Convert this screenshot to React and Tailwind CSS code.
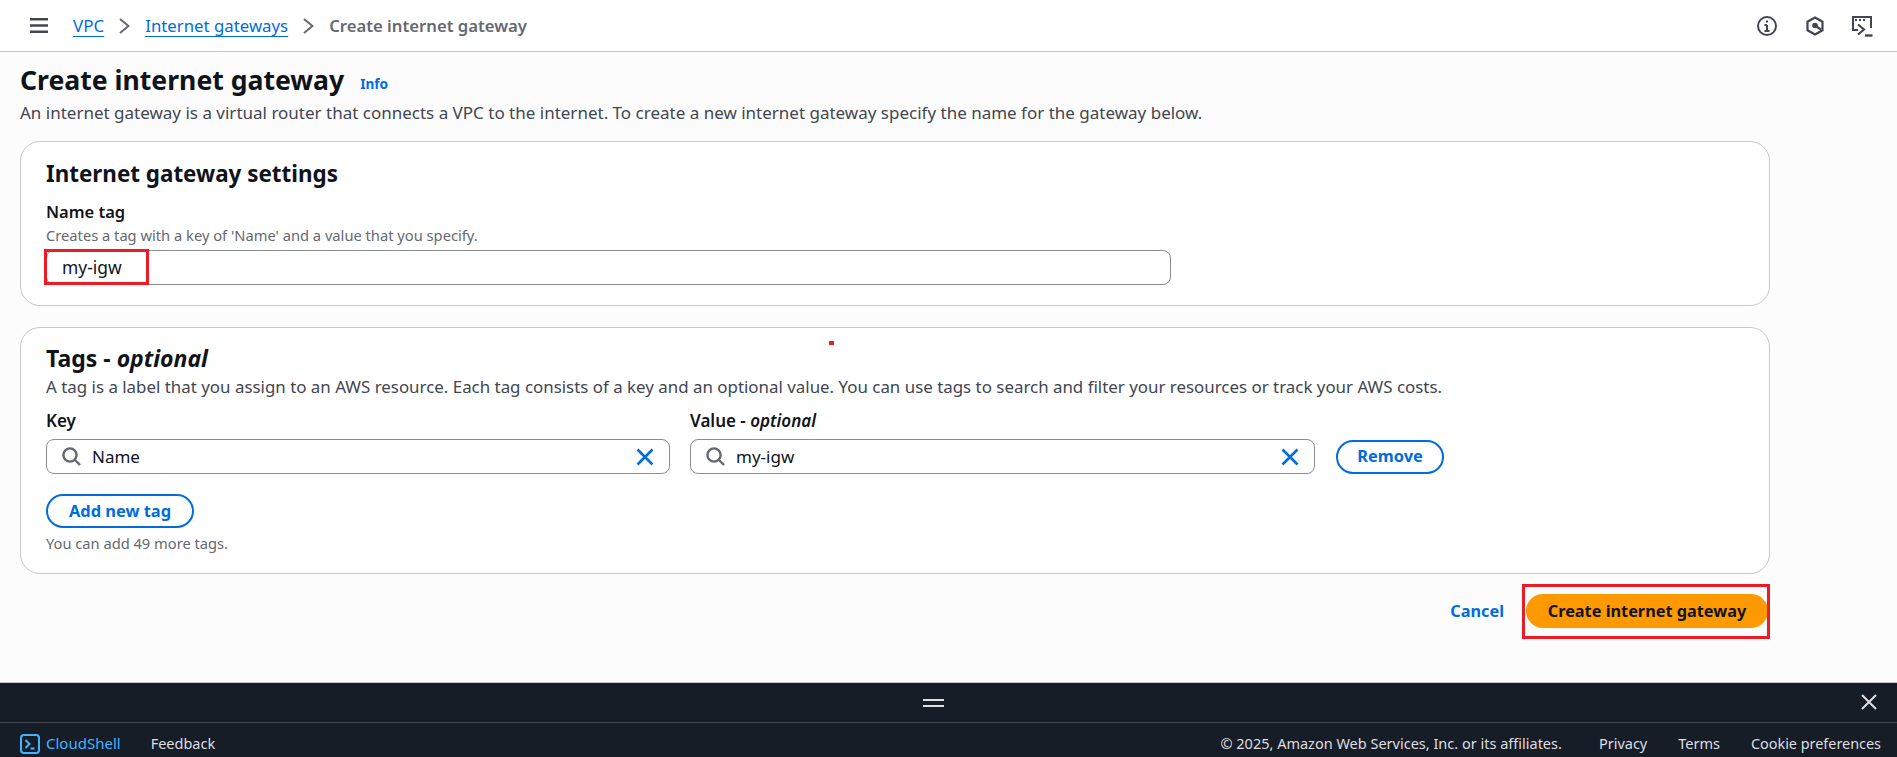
import React from "react";

const Chevron = () => (
  <svg width="11" height="16" viewBox="0 0 11 16" fill="none" stroke="#656871" strokeWidth="2" className="mx-[15px] shrink-0">
    <path d="M1 1l8.5 7L1 15" />
  </svg>
);

const SearchIcon = () => (
  <svg width="19" height="19" viewBox="0 0 19 19" fill="none" stroke="#656871" strokeWidth="2.4" className="shrink-0">
    <circle cx="8" cy="8" r="6.6" />
    <path d="M12.5 12.5l5.5 5.5" />
  </svg>
);

const ClearIcon = () => (
  <svg width="18" height="18" viewBox="0 0 18 18" fill="none" stroke="#006ce0" strokeWidth="2.6" className="shrink-0">
    <path d="M1.5 1.5l15 15M16.5 1.5l-15 15" />
  </svg>
);

const Clearable = ({ value, width }) => (
  <div className={`flex items-center h-[35px] ${width} rounded-lg border border-[#8c8c94] bg-white pl-[15px] pr-[15px]`}>
    <SearchIcon />
    <span className="ml-[11px] flex-1 text-[17px] text-[#0f141a]">{value}</span>
    <ClearIcon />
  </div>
);

const Outline = ({ children, className }) => (
  <button className={`h-[34px] rounded-full border-2 border-[#006ce0] bg-white text-[16.4px] font-bold text-[#006ce0] ${className}`}>
    {children}
  </button>
);

const App = () => {
  return (
    <div className="relative flex h-[757px] flex-col overflow-hidden bg-[#fcfcfc] font-['Noto_Sans',sans-serif] text-[#0f141a]">
      {/* top breadcrumb bar */}
      <header className="flex h-[52px] shrink-0 items-center border-b border-[#c6c6cd] bg-white pl-[30px] pr-[24px]">
        <svg width="18" height="15" viewBox="0 0 18 15" className="text-[#424650]">
          <path d="M0 1.3h18M0 7.5h18M0 13.7h18" stroke="currentColor" strokeWidth="2.5" fill="none" />
        </svg>
        <a className="ml-[25px] text-[17px] text-[#006ce0] underline underline-offset-4">VPC</a>
        <Chevron />
        <a className="text-[16.8px] text-[#006ce0] underline underline-offset-4">Internet gateways</a>
        <Chevron />
        <span className="text-[16.7px] font-semibold text-[#656871]">Create internet gateway</span>
        <div className="ml-auto flex items-center text-[#424650]">
          <svg width="20" height="20" viewBox="0 0 20 20" fill="none" stroke="currentColor" strokeWidth="2">
            <circle cx="10" cy="10" r="9" />
            <path d="M10 9v6M7.5 15h5M7.5 9H10" />
            <path d="M10 4.5v2" />
          </svg>
          <svg width="20" height="20" viewBox="0 0 20 20" fill="none" stroke="currentColor" strokeWidth="2.2" className="ml-[28px]">
            <path d="M10 1.5l7.5 4.2v8.6L10 18.5l-7.5-4.2V5.7z" />
            <circle cx="10" cy="9.5" r="2.8" fill="currentColor" stroke="none" />
            <path d="M10.5 10l5.5 3.5" />
          </svg>
          <svg width="22" height="22" viewBox="0 0 22 22" fill="none" stroke="currentColor" strokeWidth="2" className="ml-[26px]">
            <path d="M7 15H2V2h18v11" />
            <path d="M4 5h2M8 5h2M12 5h2" strokeWidth="2" />
            <path d="M7 9.5l6 5-6 5" strokeWidth="2.2" />
            <path d="M14 20.5h7.5" strokeWidth="2.4" />
          </svg>
        </div>
      </header>

      <main className="flex-1 pl-[20px]">
        <div className="mt-[10px] flex h-[36px] items-center">
          <h1 className="text-[26.6px] font-bold leading-[36px]">Create internet gateway</h1>
          <a className="ml-[16px] mt-[8px] text-[13.6px] font-bold text-[#006ce0]">Info</a>
        </div>
        <p className="mt-[5px] text-[17px] leading-[20px] text-[#424650]">
          An internet gateway is a virtual router that connects a VPC to the internet. To create a new internet gateway specify the name for the gateway below.
        </p>

        <section className="mt-[18px] h-[165px] w-[1750px] rounded-[20px] border border-[#c6c6cd] bg-white pl-[25px] pt-[18px]">
          <h2 className="text-[22.4px] font-bold leading-[28px]">Internet gateway settings</h2>
          <div className="mt-[13px] text-[16.5px] font-semibold leading-[22px]">Name tag</div>
          <div className="mt-[3px] text-[14.7px] leading-[18px] text-[#656871]">Creates a tag with a key of 'Name' and a value that you specify.</div>
          <div className="mt-[6px] flex h-[35px] w-[1125px] items-center rounded-lg border border-[#8c8c94] bg-white pl-[15px] text-[17.4px]">my-igw</div>
        </section>

        <section className="mt-[21px] h-[247px] w-[1750px] rounded-[20px] border border-[#c6c6cd] bg-white pl-[25px] pt-[16px]">
          <h2 className="text-[23px] leading-[28px] font-bold">
            Tags - <em className="font-bold italic">optional</em>
          </h2>
          <p className="mt-[5px] text-[16.9px] leading-[20px] text-[#424650]">
            A tag is a label that you assign to an AWS resource. Each tag consists of a key and an optional value. You can use tags to search and filter your resources or track your AWS costs.
          </p>
          <div className="mt-[13px] flex text-[17px] font-semibold leading-[22px]">
            <div className="w-[644px]">Key</div>
            <div>
              Value - <em className="italic">optional</em>
            </div>
          </div>
          <div className="mt-[7px] flex items-center">
            <Clearable value="Name" width="w-[624px]" />
            <div className="ml-[20px]">
              <Clearable value="my-igw" width="w-[625px]" />
            </div>
            <Outline className="ml-[21px] w-[108px]">Remove</Outline>
          </div>
          <Outline className="mt-[20px] block w-[148px]">Add new tag</Outline>
          <div className="mt-[6px] text-[14.66px] leading-[18px] text-[#656871]">You can add 49 more tags.</div>
        </section>

        <div className="mt-[20px] flex w-[1750px] items-center justify-end">
          <a className="mr-[22px] text-[16.3px] font-bold text-[#006ce0]">Cancel</a>
          <button className="mr-[2px] h-[34px] w-[242px] rounded-full bg-[#ff9900] text-[16.3px] font-bold text-[#0f141a]">
            Create internet gateway
          </button>
        </div>
      </main>

      {/* cloudshell bar */}
      <footer className="h-[75px] shrink-0 border-t border-[#c6c6cd] bg-[#161d26] text-[14.5px] text-[#dedee3]">
        <div className="relative flex h-[40px] items-center border-b border-[#424650] pl-[923px]">
          <svg width="21" height="8" viewBox="0 0 21 8" className="text-[#dedee3]">
            <path d="M0 1h21M0 7h21" stroke="currentColor" strokeWidth="2" />
          </svg>
          <svg width="16" height="16" viewBox="0 0 16 16" fill="none" stroke="#dedee3" strokeWidth="2" className="absolute right-[20px] top-[11px]">
            <path d="M1 1l14 14M15 1L1 15" />
          </svg>
        </div>
        <div className="flex h-[34px] items-center pl-[20px] pr-[16px] pt-[7px]">
          <svg width="20" height="20" viewBox="0 0 20 20" fill="none" stroke="#42b4ff" strokeWidth="2">
            <rect x="1" y="1" width="18" height="18" rx="3" />
            <path d="M5.5 6l4 4-4 4M10.5 14.5h4" />
          </svg>
          <span className="ml-[6px] text-[15px] text-[#42b4ff]">CloudShell</span>
          <span className="ml-[30px]">Feedback</span>
          <span className="ml-auto">© 2025, Amazon Web Services, Inc. or its affiliates.</span>
          <span className="ml-[37px]">Privacy</span>
          <span className="ml-[31px]">Terms</span>
          <span className="ml-[31px] text-[14.4px]">Cookie preferences</span>
        </div>
      </footer>

      {/* red annotation marks drawn over the screenshot */}
      <div className="absolute left-[44px] top-[249px] h-[36px] w-[105px] border-[3px] border-[#ed1c24]" />
      <div className="absolute left-[1522px] top-[584px] h-[55px] w-[248px] border-[3px] border-[#ed1c24]" />
      <div className="absolute left-[829px] top-[341px] h-[4px] w-[5px] bg-[#ed1c24]" />
    </div>
  );
};

export default App;
